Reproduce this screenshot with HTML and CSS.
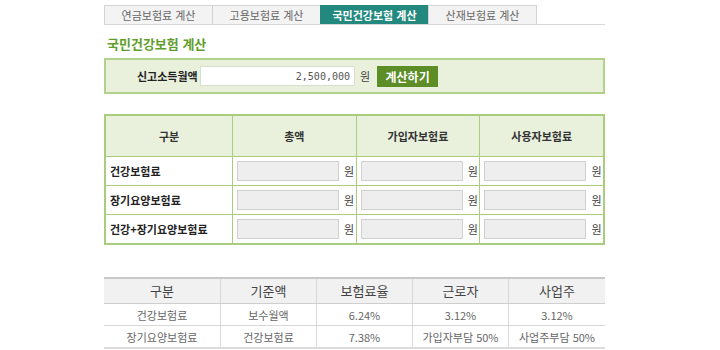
FILE: index.html
```html
<!DOCTYPE html>
<html lang="ko">
<head>
    <meta charset="UTF-8">
    <title>국민건강보험 계산</title>
    <link rel="stylesheet" href="styles.css">
</head>
<body>
    <div class="container">
        <ul class="tabs">
            <li>연금보험료 계산</li>
            <li>고용보험료 계산</li>
            <li class="active">국민건강보험 계산</li>
            <li>산재보험료 계산</li>
        </ul>

        <h2 class="title">국민건강보험 계산</h2>

        <div class="calc-box">
            <span class="calc-label">신고소득월액</span>
            <input type="text" class="income" value="2,500,000">
            <span class="unit">원</span>
            <button class="calc-btn">계산하기</button>
        </div>

        <table class="result">
            <thead>
                <tr>
                    <th>구분</th>
                    <th>총액</th>
                    <th>가입자보험료</th>
                    <th>사용자보험료</th>
                </tr>
            </thead>
            <tbody>
                <tr>
                    <td class="name">건강보험료</td>
                    <td><input type="text"> <span>원</span></td>
                    <td><input type="text"> <span>원</span></td>
                    <td><input type="text"> <span>원</span></td>
                </tr>
                <tr>
                    <td class="name">장기요양보험료</td>
                    <td><input type="text"> <span>원</span></td>
                    <td><input type="text"> <span>원</span></td>
                    <td><input type="text"> <span>원</span></td>
                </tr>
                <tr>
                    <td class="name">건강+장기요양보험료</td>
                    <td><input type="text"> <span>원</span></td>
                    <td><input type="text"> <span>원</span></td>
                    <td><input type="text"> <span>원</span></td>
                </tr>
            </tbody>
        </table>

        <table class="rates">
            <thead>
                <tr>
                    <th class="c1">구분</th>
                    <th class="c2">기준액</th>
                    <th class="c3">보험료율</th>
                    <th class="c4">근로자</th>
                    <th>사업주</th>
                </tr>
            </thead>
            <tbody>
                <tr>
                    <td>건강보험료</td>
                    <td>보수월액</td>
                    <td>6.24%</td>
                    <td>3.12%</td>
                    <td>3.12%</td>
                </tr>
                <tr>
                    <td>장기요양보험료</td>
                    <td>건강보험료</td>
                    <td>7.38%</td>
                    <td>가입자부담 50%</td>
                    <td>사업주부담 50%</td>
                </tr>
            </tbody>
        </table>
    </div>
</body>
</html>
```

FILE: styles.css
```css
body {
    margin: 0;
    background: #fff;
    font-family: "Noto Sans CJK KR", "Noto Sans", sans-serif;
    color: #333;
}

.container {
    width: 501px;
    margin-left: 104px;
    padding-top: 5px;
}

.tabs {
    list-style: none;
    margin: 0;
    padding: 0;
    display: flex;
    border-bottom: 1px solid #d8d8d8;
}

.tabs li {
    width: 107px;
    height: 18px;
    line-height: 18px;
    text-align: center;
    font-size: 11px;
    color: #666;
    background: #f3f3f3;
    border: 1px solid #d4d4d4;
    border-bottom: none;
    margin-right: -1px;
}

.tabs li.active {
    background: #23897f;
    border-color: #23897f;
    color: #fff;
    font-weight: bold;
}

.title {
    margin: 9px 0 0 3px;
    height: 20px;
    line-height: 20px;
    font-size: 13px;
    font-weight: bold;
    color: #5f9e2c;
}

.calc-box {
    margin-top: 4px;
    height: 32px;
    display: flex;
    align-items: center;
    background: #e9f1dd;
    border: 2px solid #b2d18a;
}

.calc-label {
    margin-left: 31px;
    width: 63px;
    font-size: 11px;
    font-weight: bold;
    color: #222;
}

.income {
    width: 145px;
    height: 18px;
    margin: 0;
    padding: 0 4px;
    border: 1px solid #d6dfcb;
    text-align: right;
    font-family: "DejaVu Sans Mono", monospace;
    font-size: 10px;
    color: #555;
}

.unit {
    margin-left: 5px;
    font-size: 11px;
    color: #444;
}

.calc-btn {
    margin-left: 7px;
    width: 61px;
    height: 21px;
    padding: 0;
    border: none;
    background: #5c8d27;
    color: #fff;
    font-family: inherit;
    font-size: 12px;
    font-weight: bold;
}

.result {
    margin-top: 20px;
    width: 100%;
    border-collapse: collapse;
    border: 2px solid #a9cc7d;
    font-size: 11px;
}

.result th {
    height: 40px;
    padding: 0;
    background: #e9f1dd;
    border: 1px solid #a9cc7d;
    font-weight: bold;
    color: #333;
}

.result td {
    height: 28px;
    border: 1px solid #a9cc7d;
    padding: 0 0 0 4px;
    line-height: 14px;
    white-space: nowrap;
}

.result td.name {
    width: 122px;
    font-weight: bold;
    color: #222;
}

.result td input {
    width: 100px;
    height: 18px;
    margin: 0;
    padding: 0;
    background: #eeeeee;
    border: 1px solid #cfcfcf;
    vertical-align: middle;
}

.result td span {
    margin-left: 2px;
    vertical-align: middle;
    color: #444;
}

.rates {
    margin-top: 32px;
    width: 100%;
    border-collapse: collapse;
    border-top: 2px solid #c8c8c8;
    border-bottom: 2px solid #dcdcdc;
    font-size: 11px;
    color: #666;
    text-align: center;
}

.rates th {
    height: 24px;
    padding: 0;
    line-height: 16px;
    background: #f1f1f1;
    border-left: 1px solid #d8d8d8;
    border-bottom: 1px solid #cfcfcf;
    font-size: 13px;
    font-weight: normal;
    color: #444;
}

.rates td {
    height: 21px;
    padding: 0;
    line-height: 14px;
    border-left: 1px solid #d8d8d8;
    border-bottom: 1px solid #d8d8d8;
}

.rates th:first-child, .rates td:first-child {
    border-left: none;
}

.rates .c1 { width: 116px; }
.rates .c2 { width: 95px; }
.rates .c3 { width: 95px; }
.rates .c4 { width: 95px; }
```
